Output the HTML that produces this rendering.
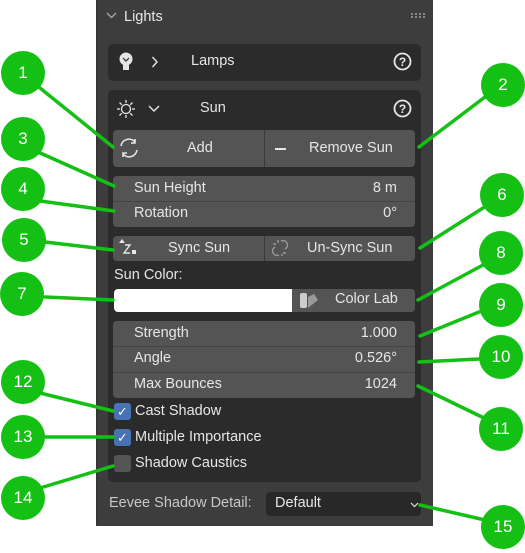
<!DOCTYPE html>
<html><head><style>
*{margin:0;padding:0;box-sizing:border-box}
body{width:525px;height:553px;background:#fff;position:relative;overflow:hidden;font-family:"Liberation Sans","DejaVu Sans",sans-serif;font-size:14.5px;color:#e6e6e6}
.a{position:absolute}
.panel{left:96px;top:0;width:337px;height:526px;background:#3d3d3d;border-left:2px solid #353535}
.sub{background:#2b2b2b;border-radius:5px}
.btn{background:#545454;border-radius:4px}
.t{position:absolute;white-space:nowrap}
.v{position:absolute;white-space:nowrap;right:128px}
.c{position:absolute;width:44px;height:44px;border-radius:50%;background:#14c014;color:#fff;font-size:17px;text-align:center;line-height:44px}
</style></head><body>
<div class="a panel"></div>
<svg class="a" style="left:106px;top:12px" width="12" height="8"><path d="M1 1l4.5 4.5L10 1" stroke="#aaa" stroke-width="1.3" fill="none"/></svg>
<div class="t" style="left:124px;top:9px;font-size:14.5px">Lights</div>
<svg class="a" style="left:411px;top:13px" width="14" height="5"><g fill="#888"><rect x="0" y="0" width="2" height="2"/><rect x="4" y="0" width="2" height="2"/><rect x="8" y="0" width="2" height="2"/><rect x="12" y="0" width="2" height="2"/><rect x="0" y="3" width="2" height="2"/><rect x="4" y="3" width="2" height="2"/><rect x="8" y="3" width="2" height="2"/><rect x="12" y="3" width="2" height="2"/></g></svg>

<div class="a sub" style="left:108px;top:44px;width:313px;height:37px"></div>
<svg class="a" style="left:118px;top:52px" width="18" height="20"><circle cx="8" cy="7" r="6.5" fill="#e6e6e6"/><rect x="5" y="13" width="6" height="5" fill="#e6e6e6"/><path d="M5 6l3 3 3-3" stroke="#2b2b2b" stroke-width="1.2" fill="none"/></svg>
<svg class="a" style="left:151px;top:56px" width="8" height="12"><path d="M1.5 1l4.5 5-4.5 5" stroke="#e6e6e6" stroke-width="1.4" fill="none"/></svg>
<div class="t" style="left:191px;top:53px">Lamps</div>
<svg class="a" style="left:393px;top:52px" width="19" height="19"><circle cx="9.5" cy="9.5" r="8" stroke="#e6e6e6" stroke-width="1.8" fill="none"/><text x="9.5" y="14" font-size="12" font-weight="bold" text-anchor="middle" fill="#e6e6e6" font-family="Liberation Sans">?</text></svg>

<div class="a sub" style="left:108px;top:90px;width:313px;height:392px"></div>
<svg class="a" style="left:116px;top:99px" width="20" height="20"><circle cx="10" cy="10" r="4.5" stroke="#e6e6e6" stroke-width="1.3" fill="none"/><g stroke="#e6e6e6" stroke-width="1.3"><line x1="10" y1="1" x2="10" y2="4"/><line x1="10" y1="16" x2="10" y2="19"/><line x1="1" y1="10" x2="4" y2="10"/><line x1="16" y1="10" x2="19" y2="10"/><line x1="3.5" y1="3.5" x2="5.8" y2="5.8"/><line x1="14.2" y1="14.2" x2="16.5" y2="16.5"/><line x1="3.5" y1="16.5" x2="5.8" y2="14.2"/><line x1="14.2" y1="5.8" x2="16.5" y2="3.5"/></g></svg>
<svg class="a" style="left:148px;top:105px" width="12" height="8"><path d="M1 1l5 5 5-5" stroke="#e6e6e6" stroke-width="1.4" fill="none"/></svg>
<div class="t" style="left:200px;top:100px">Sun</div>
<svg class="a" style="left:393px;top:99px" width="19" height="19"><circle cx="9.5" cy="9.5" r="8" stroke="#e6e6e6" stroke-width="1.8" fill="none"/><text x="9.5" y="14" font-size="12" font-weight="bold" text-anchor="middle" fill="#e6e6e6" font-family="Liberation Sans">?</text></svg>

<div class="a btn" style="left:113px;top:130px;width:302px;height:37px"></div>
<div class="a" style="left:264px;top:130px;width:1px;height:37px;background:#3a3a3a"></div>
<svg class="a" style="left:118px;top:137px" width="22" height="22"><path d="M3 9a8 8 0 0 1 14-4M17 2v4h-4M19 13a8 8 0 0 1-14 4M5 20v-4h4" stroke="#e6e6e6" stroke-width="1.6" fill="none"/></svg>
<div class="t" style="left:187px;top:140px">Add</div>
<div class="a" style="left:275px;top:148px;width:11px;height:1.5px;background:#e6e6e6"></div>
<div class="t" style="left:309px;top:140px">Remove Sun</div>

<div class="a btn" style="left:113px;top:176px;width:302px;height:51px"></div>
<div class="a" style="left:113px;top:201px;width:302px;height:1px;background:#444"></div>
<div class="t" style="left:134px;top:180px">Sun Height</div><div class="v" style="top:180px">8 m</div>
<div class="t" style="left:134px;top:205px">Rotation</div><div class="v" style="top:205px">0°</div>

<div class="a btn" style="left:113px;top:236px;width:302px;height:25px"></div>
<div class="a" style="left:264px;top:236px;width:1px;height:25px;background:#3a3a3a"></div>
<svg class="a" style="left:119px;top:238px" width="22" height="20"><path d="M3 1l3 4H0z" fill="#e6e6e6"/><path d="M6 7h5l-6 8h6" stroke="#e6e6e6" stroke-width="1.4" fill="none"/><rect x="13" y="12" width="4" height="4" fill="#e6e6e6"/></svg>
<div class="t" style="left:168px;top:240px">Sync Sun</div>
<svg class="a" style="left:270px;top:238px" width="20" height="20" stroke="#999" stroke-width="1.4" fill="none"><path d="M5 9a4 4 0 0 0 4 8M11 3a4 4 0 0 1 4 8"/><path d="M8 2v3M3 6h3M16 15h-3M12 18v-2"/></svg>
<div class="t" style="left:307px;top:240px">Un-Sync Sun</div>

<div class="t" style="left:114px;top:267px">Sun Color:</div>
<div class="a" style="left:114px;top:289px;width:178px;height:23px;background:#fff;border-radius:4px 0 0 4px"></div>
<div class="a btn" style="left:292px;top:289px;width:123px;height:23px;border-radius:0 4px 4px 0"></div>
<svg class="a" style="left:298px;top:291px" width="24" height="20"><rect x="2" y="2" width="7" height="15" rx="2" fill="#ccc"/><path d="M10 6l6-3 4 6-10 8z" fill="#999"/></svg>
<div class="t" style="left:335px;top:291px">Color Lab</div>

<div class="a btn" style="left:113px;top:321px;width:302px;height:77px"></div>
<div class="a" style="left:113px;top:346px;width:302px;height:1px;background:#444"></div>
<div class="a" style="left:113px;top:372px;width:302px;height:1px;background:#444"></div>
<div class="t" style="left:134px;top:325px">Strength</div><div class="v" style="top:325px">1.000</div>
<div class="t" style="left:134px;top:350px">Angle</div><div class="v" style="top:350px">0.526°</div>
<div class="t" style="left:134px;top:376px">Max Bounces</div><div class="v" style="top:376px">1024</div>

<div class="a" style="left:114px;top:403px;width:17px;height:17px;background:#4772b3;border-radius:3px;color:#fff;font-size:13px;text-align:center;line-height:17px">✓</div>
<div class="t" style="left:135px;top:403px">Cast Shadow</div>
<div class="a" style="left:114px;top:429px;width:17px;height:17px;background:#4772b3;border-radius:3px;color:#fff;font-size:13px;text-align:center;line-height:17px">✓</div>
<div class="t" style="left:135px;top:429px">Multiple Importance</div>
<div class="a" style="left:114px;top:455px;width:17px;height:17px;background:#545454;border-radius:3px"></div>
<div class="t" style="left:135px;top:455px">Shadow Caustics</div>

<div class="t" style="left:109px;top:495px;color:#c8c8c8">Eevee Shadow Detail:</div>
<div class="a" style="left:266px;top:492px;width:155px;height:24px;background:#282828;border-radius:4px"></div>
<div class="t" style="left:275px;top:495px">Default</div>
<svg class="a" style="left:410px;top:502px" width="9" height="6"><path d="M1 1l3.5 3.5L8 1" stroke="#e6e6e6" stroke-width="1.2" fill="none"/></svg>

<svg class="a" style="left:0;top:0" width="525" height="553">
<g stroke="#14c014" stroke-width="3.5" stroke-linecap="round">
<line x1="40" y1="88" x2="113" y2="147"/><line x1="485" y1="97" x2="419" y2="147"/>
<line x1="38" y1="152" x2="114" y2="186"/><line x1="40" y1="201" x2="114" y2="211"/>
<line x1="45" y1="242" x2="113" y2="250"/><line x1="483" y1="208" x2="420" y2="248"/>
<line x1="45" y1="297" x2="113" y2="300"/><line x1="483" y1="265" x2="418" y2="300"/>
<line x1="479" y1="312" x2="420" y2="336"/><line x1="479" y1="359" x2="419" y2="362"/>
<line x1="484" y1="418" x2="418" y2="386"/><line x1="40" y1="393" x2="113" y2="411"/>
<line x1="45" y1="437" x2="113" y2="437"/><line x1="40" y1="488" x2="113" y2="466"/>
<line x1="485" y1="520" x2="420" y2="505"/>
</g></svg>
<div class="c" style="left:1px;top:51px">1</div>
<div class="c" style="left:481px;top:63px">2</div>
<div class="c" style="left:1px;top:117px">3</div>
<div class="c" style="left:1px;top:167px">4</div>
<div class="c" style="left:2px;top:218px">5</div>
<div class="c" style="left:480px;top:173px">6</div>
<div class="c" style="left:0px;top:272px">7</div>
<div class="c" style="left:479px;top:231px">8</div>
<div class="c" style="left:479px;top:283px">9</div>
<div class="c" style="left:479px;top:335px">10</div>
<div class="c" style="left:479px;top:407px">11</div>
<div class="c" style="left:1px;top:360px">12</div>
<div class="c" style="left:1px;top:415px">13</div>
<div class="c" style="left:1px;top:476px">14</div>
<div class="c" style="left:481px;top:505px">15</div>
</body></html>
